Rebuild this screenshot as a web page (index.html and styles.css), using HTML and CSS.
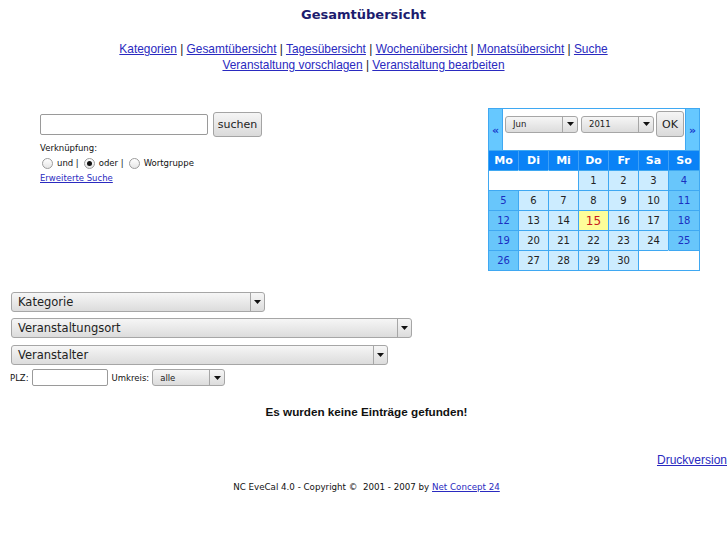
FILE: index.html
```html
<!DOCTYPE html>
<html lang="de">
<head>
<meta charset="utf-8">
<title>Gesamtübersicht</title>
<link rel="stylesheet" href="styles.css">
</head>
<body>
<h1 class="title">Gesamtübersicht</h1>
<nav class="nav">
  <div><a href="#">Kategorien</a> | <a href="#">Gesamtübersicht</a> | <a href="#">Tagesübersicht</a> | <a href="#">Wochenübersicht</a> | <a href="#">Monatsübersicht</a> | <a href="#">Suche</a></div>
  <div><a href="#">Veranstaltung vorschlagen</a> | <a href="#">Veranstaltung bearbeiten</a></div>
</nav>

<div class="top">
  <form class="search">
    <div class="search-row">
      <input class="search-input" type="text">
      <button class="btn btn-search" type="button">suchen</button>
    </div>
    <div class="small label">Verknüpfung:</div>
    <div class="small radios">
      <label class="radio-item"><span class="radio"></span>und |</label>
      <label class="radio-item"><span class="radio checked"></span>oder |</label>
      <label class="radio-item"><span class="radio"></span>Wortgruppe</label>
    </div>
    <a class="small adv" href="#">Erweiterte Suche</a>
  </form>

  <div class="cal">
    <div class="cal-head">
      <div class="cal-nav cal-prev">«</div>
      <div class="cal-form">
        <div class="sel sel-small sel-month"><span class="sel-text">Jun</span><span class="sel-arrow"><svg width="7" height="4" viewBox="0 0 7 4"><path d="M0 0h7L3.5 4z" fill="#111"/></svg></span></div>
        <div class="sel sel-small sel-year"><span class="sel-text">2011</span><span class="sel-arrow"><svg width="7" height="4" viewBox="0 0 7 4"><path d="M0 0h7L3.5 4z" fill="#111"/></svg></span></div>
        <button class="btn btn-ok" type="button">OK</button>
      </div>
      <div class="cal-nav cal-next">»</div>
    </div>
    <table class="cal-grid">
      <tr class="dnames"><td>Mo</td><td>Di</td><td>Mi</td><td>Do</td><td>Fr</td><td>Sa</td><td>So</td></tr>
      <tr><td class="e"></td><td class="e"></td><td class="e last"></td><td class="d">1</td><td class="d">2</td><td class="d">3</td><td class="w">4</td></tr>
      <tr><td class="w">5</td><td class="d">6</td><td class="d">7</td><td class="d">8</td><td class="d">9</td><td class="d">10</td><td class="w">11</td></tr>
      <tr><td class="w">12</td><td class="d">13</td><td class="d">14</td><td class="today">15</td><td class="d">16</td><td class="d">17</td><td class="w">18</td></tr>
      <tr><td class="w">19</td><td class="d">20</td><td class="d">21</td><td class="d">22</td><td class="d">23</td><td class="d">24</td><td class="w">25</td></tr>
      <tr><td class="w">26</td><td class="d">27</td><td class="d">28</td><td class="d">29</td><td class="d">30</td><td class="e"></td><td class="e"></td></tr>
    </table>
  </div>
</div>

<div class="filters">
  <div class="sel sel-big sel-kat"><span class="sel-text">Kategorie</span><span class="sel-arrow"><svg width="7" height="4" viewBox="0 0 7 4"><path d="M0 0h7L3.5 4z" fill="#111"/></svg></span></div>
  <div class="sel sel-big sel-ort"><span class="sel-text">Veranstaltungsort</span><span class="sel-arrow"><svg width="7" height="4" viewBox="0 0 7 4"><path d="M0 0h7L3.5 4z" fill="#111"/></svg></span></div>
  <div class="sel sel-big sel-ver"><span class="sel-text">Veranstalter</span><span class="sel-arrow"><svg width="7" height="4" viewBox="0 0 7 4"><path d="M0 0h7L3.5 4z" fill="#111"/></svg></span></div>
  <div class="plz-row small">
    <span>PLZ:</span>
    <input class="plz-input" type="text">
    <span>Umkreis:</span>
    <div class="sel sel-small sel-umkreis"><span class="sel-text">alle</span><span class="sel-arrow"><svg width="7" height="4" viewBox="0 0 7 4"><path d="M0 0h7L3.5 4z" fill="#111"/></svg></span></div>
  </div>
</div>

<p class="empty">Es wurden keine Einträge gefunden!</p>
<div class="print"><a href="#">Druckversion</a></div>
<p class="footer">NC EveCal 4.0 - Copyright ©&nbsp; 2001 - 2007 by <a href="#">Net Concept 24</a></p>
</body>
</html>
```

FILE: styles.css
```css
html, body {
  margin: 0;
  padding: 0;
  background: #fff;
}
body {
  font-family: "DejaVu Sans", sans-serif;
  color: #111;
  width: 727px;
}
a {
  color: #2a2ac0;
  text-decoration: underline;
}
.title {
  margin: 0;
  padding-top: 7px;
  font: bold 13px/16px "DejaVu Sans", sans-serif;
  color: #1c1c6e;
  text-align: center;
}
.nav {
  margin-top: 18px;
  font: 11.9px/16px "Liberation Sans", Arial, sans-serif;
  text-align: center;
  color: #222;
}
.top {
  margin-top: 35px;
  width: 700px;
  display: flex;
  justify-content: space-between;
  align-items: flex-start;
}
.search {
  margin: 4px 0 0 40px;
  display: flex;
  flex-direction: column;
  align-items: flex-start;
}
.search-row {
  display: flex;
  align-items: center;
  gap: 5px;
  height: 25px;
}
.search-input {
  box-sizing: border-box;
  width: 168px;
  height: 21px;
  border: 1px solid #9a9a9a;
  border-radius: 2px;
  margin: 0;
  padding: 0 3px;
  background: #fff;
}
.btn {
  box-sizing: border-box;
  border: 1px solid #a4a4a4;
  border-radius: 3px;
  background: linear-gradient(#f5f5f5, #dadada);
  font-family: "DejaVu Sans", sans-serif;
  color: #222;
  padding: 0;
  margin: 0;
}
.btn-search {
  width: 49px;
  height: 25px;
  font-size: 11px;
}
.small {
  font-size: 8.5px;
}
.label {
  margin-top: 5px;
  line-height: 12px;
}
.radios {
  margin-top: 2px;
  height: 14px;
  display: flex;
  align-items: center;
}
.radio-item {
  display: flex;
  align-items: center;
  margin-left: 2px;
  margin-right: 3px;
}
.radio {
  box-sizing: border-box;
  width: 11px;
  height: 11px;
  border: 1px solid #9c9c9c;
  border-radius: 50%;
  background: linear-gradient(#ffffff, #e6e6e6);
  margin-right: 4px;
  display: flex;
  align-items: center;
  justify-content: center;
}
.radio.checked::after {
  content: "";
  width: 5px;
  height: 5px;
  border-radius: 50%;
  background: #111;
}
.adv {
  margin-top: 2px;
  line-height: 12px;
}

/* calendar */
.cal {
  width: 210px;
  border: 1px solid #3fa8f2;
  background: #fff;
}
.cal-head {
  display: flex;
  height: 41px;
}
.cal-nav {
  width: 13px;
  background: #66c8ff;
  color: #1a3acc;
  font-weight: bold;
  font-size: 11px;
  display: flex;
  align-items: center;
  justify-content: center;
  padding-top: 1px;
}
.cal-prev {
  border-right: 1px solid #3fa8f2;
}
.cal-next {
  border-left: 1px solid #3fa8f2;
}
.cal-form {
  flex: 1;
  display: flex;
  align-items: center;
  height: 26px;
  margin-top: 2px;
  padding-left: 2px;
}
.sel {
  box-sizing: border-box;
  display: flex;
  align-items: stretch;
  border: 1px solid #a6a6a6;
  border-radius: 3px;
  background: linear-gradient(#f6f6f6, #dcdcdc);
  color: #222;
}
.sel-text {
  flex: 1;
  display: flex;
  align-items: center;
  white-space: nowrap;
  overflow: hidden;
}
.sel-arrow {
  width: 13px;
  border-left: 1px solid #a6a6a6;
  display: flex;
  align-items: center;
  justify-content: center;
}
.sel-small {
  height: 17px;
  font-size: 8.5px;
}
.sel-small .sel-text {
  padding-left: 7px;
}
.sel-small .sel-arrow {
  width: 14px;
}
.sel-month {
  width: 73px;
}
.sel-year {
  width: 73px;
  margin-left: 3px;
}
.btn-ok {
  width: 28px;
  height: 26px;
  font-size: 11px;
  margin-left: 2px;
}
.cal-grid {
  border-collapse: separate;
  border-spacing: 0;
  table-layout: fixed;
  width: 210px;
}
.cal-grid td {
  box-sizing: border-box;
  width: 30px;
  height: 20px;
  padding: 0;
  text-align: center;
  vertical-align: middle;
  border-top: 1px solid #3fa8f2;
  border-right: 1px solid #3fa8f2;
  font-size: 10px;
  color: #222;
}
.cal-grid td:last-child {
  border-right: 0;
}
.dnames td {
  background: #0a82f6;
  color: #fff;
  font-weight: bold;
  font-size: 11px;
  border-right-color: #3fa0f6;
}
.cal-grid td.d {
  background: #ccecff;
}
.cal-grid td.w {
  background: #68c6fb;
  color: #1a2fc0;
}
.cal-grid td.today {
  background: #fefe99;
  color: #c82020;
  font-size: 12px;
}
.cal-grid td.e {
  background: #fff;
  border-right-color: #fff;
}
.cal-grid td.e.last {
  border-right-color: #3fa8f2;
}

/* filters */
.filters {
  margin-top: 21px;
  padding-left: 10px;
  display: flex;
  flex-direction: column;
  align-items: flex-start;
}
.sel-big {
  height: 20px;
  font-size: 11.5px;
  margin-left: 1px;
}
.sel-big .sel-text {
  padding-left: 6px;
}
.sel-big .sel-arrow {
  width: 13px;
}
.sel-kat {
  width: 254px;
}
.sel-ort {
  width: 401px;
  margin-top: 6px;
}
.sel-ver {
  width: 377px;
  margin-top: 7px;
}
.plz-row {
  margin-top: 4px;
  display: flex;
  align-items: center;
  height: 17px;
}
.plz-input {
  box-sizing: border-box;
  width: 76px;
  height: 17px;
  border: 1px solid #9a9a9a;
  border-radius: 2px;
  margin: 0 4px 0 3px;
  padding: 0;
}
.sel-umkreis {
  width: 73px;
  margin-left: 3px;
}
.empty {
  margin: 18px 0 0;
  padding-left: 6px;
  text-align: center;
  font: bold 11.7px/16px "Liberation Sans", Arial, sans-serif;
  color: #111;
}
.print {
  margin-top: 32px;
  text-align: right;
  font: 12px/16px "Liberation Sans", Arial, sans-serif;
}
.footer {
  margin: 13px 0 0;
  padding-left: 6px;
  text-align: center;
  font-size: 8.7px;
  line-height: 12px;
  color: #111;
}
```
